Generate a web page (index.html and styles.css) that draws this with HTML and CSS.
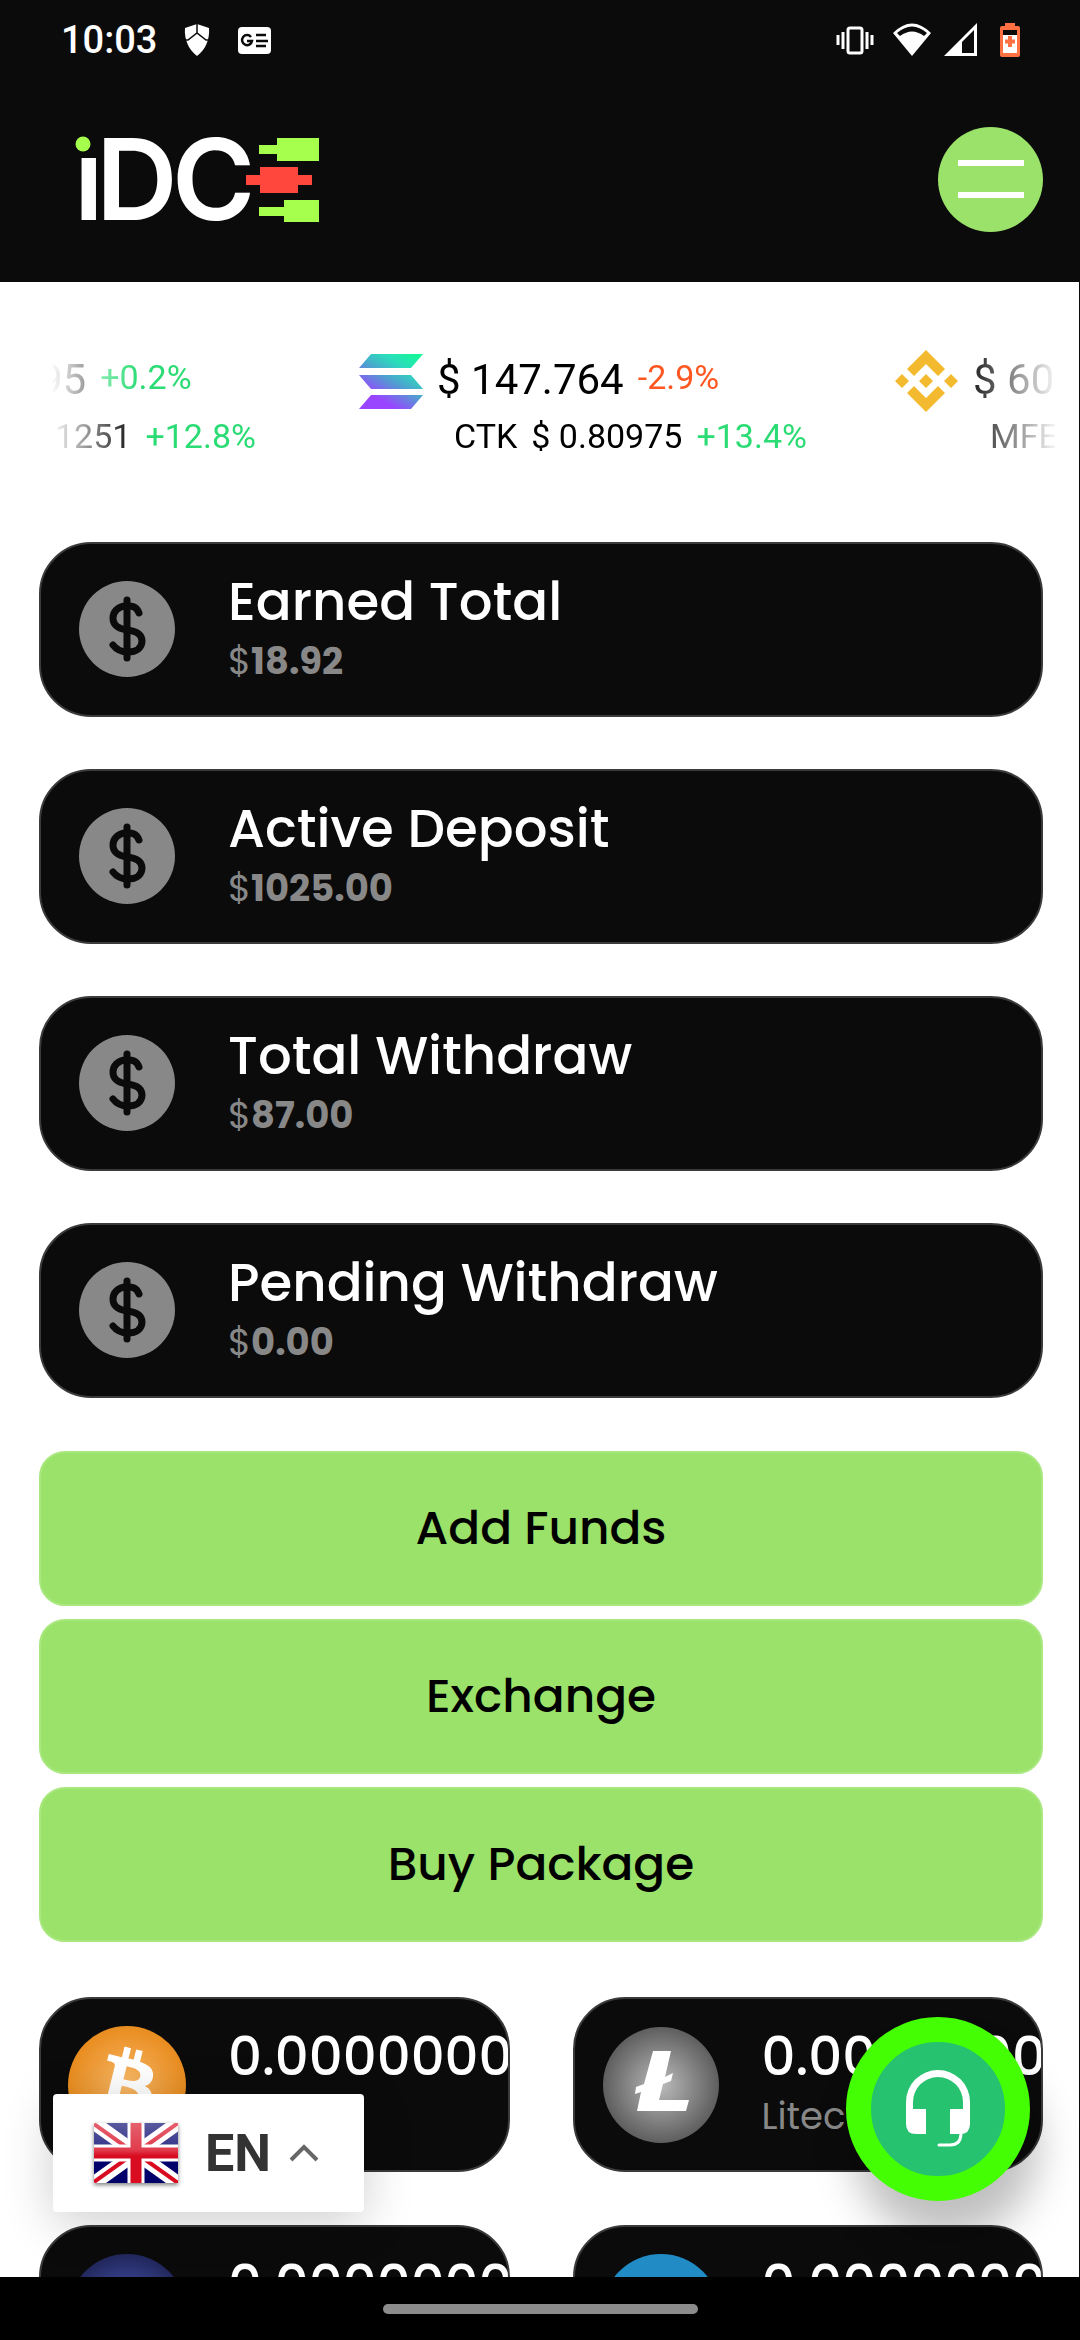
FILE: index.html
```html
<!DOCTYPE html>
<html lang="en">
<head>
<meta charset="utf-8">
<meta name="viewport" content="width=device-width, initial-scale=1">
<title>iDCE Dashboard</title>
<link rel="stylesheet" href="styles.css">
</head>
<body>
<svg class="defs" aria-hidden="true">
  <defs>
    <symbol id="coin" viewBox="0 0 96 96">
      <circle cx="48" cy="48" r="48" fill="#888"/>
      <g fill="none" stroke="#0b0b0b" stroke-width="7" stroke-linecap="round">
        <path d="M48 19V77"/>
        <path d="M60 32C57 24 51 25 47 25C39 25 34 31 34 37C34 46 42 48 48 49C56 50 63 52 63 60C63 67 57 71 49 71C41 71 37 68 34 64"/>
      </g>
    </symbol>
  </defs>
</svg>
<div class="screen">
  <div class="status">
    <span class="time">10:03</span>
    <svg class="shield" width="26" height="32" viewBox="0 0 26 32"><path d="M13 0L25 4C26 16 21 26 13 32C5 26 0 16 1 4Z" fill="#fff"/><path d="M13 0V9M0 16H4L13 9L22 16H26" fill="none" stroke="#0b0b0b" stroke-width="1.500"/></svg>
    <svg class="news" width="34" height="27" viewBox="0 0 34 27"><rect width="33" height="27" rx="4" fill="#fff"/><path d="M13 10A5 5 0 1 0 14 14H9" fill="none" stroke="#0b0b0b" stroke-width="2.500"/><path d="M18 8H28M18 14H30M18 19H28" stroke="#0b0b0b" stroke-width="2.500"/></svg>
    <div class="system">
      <svg width="38" height="34" viewBox="0 0 38 34"><rect x="12" y="5" width="14" height="25" rx="2" fill="none" stroke="#fff" stroke-width="3"/><path d="M7 9V26M31 9V26M2 12V22M36 12V22" stroke="#fff" stroke-width="3"/></svg>
      <svg width="40" height="34" viewBox="0 0 40 34"><path d="M20 33L1 10Q20-9 39 10Z" fill="#fff"/><path d="M5 10Q20-3 35 10L32 13Q20 4 8 13Z" fill="#0b0b0b"/></svg>
      <svg width="34" height="34" viewBox="0 0 34 34"><path d="M0 33L33 0V33Z" fill="#fff"/><path d="M18 19L30 7V30H18Z" fill="#0b0b0b"/></svg>
      <svg class="battery" width="20" height="34" viewBox="0 0 20 34"><path d="M5 0H15V3H18Q20 3 20 5V32Q20 34 18 34H2Q0 34 0 32V5Q0 3 2 3H5Z" fill="#ff7043"/><path d="M3 7H17V12H3Z" fill="#0b0b0b"/><path d="M3 12H17V30H3Z" fill="#fff"/><path d="M10 13V24M5 18.500H15" stroke="#ff7043" stroke-width="4"/></svg>
    </div>
  </div>
  <header class="header">
    <a class="logo" href="#" aria-label="iDCE home">
      <svg width="246" height="90" viewBox="0 0 246 90">
        <g class="logo-text"><text x="-1" y="86">ı</text><text x="21" y="86">D</text><text x="97" y="86">C</text></g>
        <circle cx="8" cy="10" r="7.500" fill="#a6ff4d"/>
        <path d="M184 11H202V4H244V27H202V20H184ZM184 73H209V66H244V88H209V82H184Z" fill="#a6ff4d"/>
        <path d="M171 41H185V33H223V41H237V51H223V59H185V51H171Z" fill="#ff473d"/>
      </svg>
    </a>
    <button class="menu" aria-label="Menu"><span></span><span></span></button>
  </header>
  <main class="main">
    <section class="ticker" aria-label="Prices">
      <div class="quote quote-first">
        <div class="major"><span class="price">95</span><span class="pct up">+0.2%</span></div>
        <div class="minor"><span>1251</span><span class="up">+12.8%</span></div>
      </div>
      <div class="quote">
        <div class="major">
          <svg class="coin-mark" width="64" height="62" viewBox="0 0 64 62"><defs><linearGradient id="sol" gradientUnits="userSpaceOnUse" x1="52" y1="0" x2="14" y2="62"><stop offset="0" stop-color="#14f995"/><stop offset=".25" stop-color="#2bdcbc"/><stop offset=".5" stop-color="#4f9fd0"/><stop offset=".8" stop-color="#9945ff"/></linearGradient></defs><path d="M12 4H64L52 18H0ZM0 25H52L64 39H12ZM12 45H64L52 59H0Z" fill="url(#sol)"/></svg>
          <span class="price">$ 147.764</span><span class="pct down">-2.9%</span></div>
        <div class="minor indent"><span>CTK</span><span class="value">$ 0.80975</span><span class="up">+13.4%</span></div>
      </div>
      <div class="quote">
        <div class="major">
          <svg class="coin-mark" width="64" height="62" viewBox="0 0 64 62"><path d="M31 0L50 19L43 26L31 14L19 26L12 19ZM31 62L50 43L43 36L31 48L19 36L12 43ZM31 24L38 31L31 38L24 31ZM7 24L14 31L7 38L0 31ZM56 24L63 31L56 38L49 31Z" fill="#f3ba2f"/></svg>
          <span class="price">$ 60</span></div>
        <div class="minor indent"><span>MFE</span></div>
      </div>
    </section>
    <section class="stats">
      <article class="card"><svg class="coin"><use href="#coin"/></svg><div class="text"><h2>Earned Total</h2><p>$<b>18.92</b></p></div></article>
      <article class="card"><svg class="coin"><use href="#coin"/></svg><div class="text"><h2>Active Deposit</h2><p>$<b>1025.00</b></p></div></article>
      <article class="card"><svg class="coin"><use href="#coin"/></svg><div class="text"><h2>Total Withdraw</h2><p>$<b>87.00</b></p></div></article>
      <article class="card"><svg class="coin"><use href="#coin"/></svg><div class="text"><h2>Pending Withdraw</h2><p>$<b>0.00</b></p></div></article>
    </section>
    <section class="actions">
      <button>Add Funds</button>
      <button>Exchange</button>
      <button>Buy Package</button>
    </section>
    <section class="wallets">
      <article class="card wallet">
        <svg class="crypto" viewBox="0 0 118 118"><defs><radialGradient id="btc"><stop offset="0" stop-color="#f9b968"/><stop offset="1" stop-color="#e88c1f"/></radialGradient></defs><circle cx="59" cy="59" r="59" fill="url(#btc)"/><path transform="scale(.02884)" fill="#fff" d="m2947.770 1754.380c40.720-272.260-166.560-418.610-450-516.240l91.950-368.800-224.500-55.940-89.510 359.090c-59.020-14.720-119.630-28.590-179.870-42.340l90.160-361.460-224.360-55.940-92 368.680c-48.840-11.120-96.810-22.110-143.350-33.690l.26-1.160-309.590-77.310-59.720 239.780s166.560 38.180 163.050 40.530c90.910 22.690 107.350 82.870 104.620 130.570l-104.740 420.150-146.810 588.570c-11.110 27.620-39.310 69.070-102.870 53.330 2.250 3.260-163.170-40.720-163.170-40.720l-111.460 256.980 292.150 72.830c54.350 13.630 107.610 27.890 160.060 41.300l-92.900 373.030 224.240 55.940 92-369.070c61.260 16.630 120.710 31.970 178.910 46.430l-91.690 367.330 224.510 55.940 92.890-372.330c382.820 72.450 670.670 43.240 791.830-303.020 97.630-278.780-4.860-439.580-206.260-544.440 146.690-33.830 257.180-130.310 286.640-329.610zm-512.930 719.260c-69.380 278.780-538.760 128.080-690.940 90.290l123.280-494.200c152.170 37.990 640.170 113.170 567.670 403.910zm69.430-723.300c-63.290 253.580-453.960 124.750-580.690 93.160l111.770-448.210c126.730 31.590 534.850 90.550 468.940 355.050z"/></svg>
        <div class="text"><h2>0.0000000</h2><p>Bitcoin</p></div>
      </article>
      <article class="card wallet">
        <svg class="crypto" viewBox="-1 -1 118 118"><defs><radialGradient id="ltc"><stop offset="0" stop-color="#bbb"/><stop offset="1" stop-color="#5e5e5e"/></radialGradient></defs><circle cx="58" cy="58" r="58" fill="url(#ltc)"/><path d="M50 24H68L62 50L70 46L68 54L60 57L56 73H86L83 84H34L38 65L32 67L33 60L41 57Z" fill="#fff"/></svg>
        <div class="text"><h2>0.0000000</h2><p>Litecoin</p></div>
      </article>
      <article class="card wallet">
        <svg class="crypto" viewBox="0 0 118 118"><defs><radialGradient id="navy"><stop offset="0" stop-color="#4d5bc0"/><stop offset="1" stop-color="#22285c"/></radialGradient></defs><circle cx="59" cy="59" r="59" fill="url(#navy)"/></svg>
        <div class="text"><h2>0.0000000</h2></div>
      </article>
      <article class="card wallet">
        <svg class="crypto" viewBox="0 0 118 118"><circle cx="59" cy="59" r="59" fill="#208bc4"/></svg>
        <div class="text"><h2>0.0000000</h2></div>
      </article>
    </section>
    <button class="language" aria-label="Language: EN">
      <svg class="flag" width="84" height="60" viewBox="0 0 84 60"><defs><linearGradient id="shine" x2="0" y2="1"><stop offset="0" stop-color="#fff" stop-opacity=".35"/><stop offset=".45" stop-color="#fff" stop-opacity=".2"/><stop offset=".55" stop-color="#fff" stop-opacity="0"/></linearGradient><clipPath id="flag-clip"><rect width="84" height="60"/></clipPath></defs><g clip-path="url(#flag-clip)"><rect width="84" height="60" fill="#00006b"/><path d="M0 0L84 60M84 0L0 60" stroke="#fff" stroke-width="14"/><path d="M0 1L42 31M84 0L42 30M42 30L84 60M42 29L0 59" stroke="#d80b20" stroke-width="4"/><path d="M42 0V60M0 30H84" stroke="#fff" stroke-width="17"/><path d="M42 0V60M0 30H84" stroke="#d80b20" stroke-width="11"/><rect width="84" height="60" fill="url(#shine)"/></g></svg>
      <span>EN</span>
      <svg width="30" height="20" viewBox="0 0 30 20"><path d="M2 17L15 4L28 17" fill="none" stroke="#666" stroke-width="4"/></svg>
    </button>
    <button class="support" aria-label="Support">
      <svg width="64" height="78" viewBox="0 0 64 78"><path d="M0 32A32 32 0 0 1 64 32V54Q64 64 54 64H44V39H57V32A25 25 0 0 0 7 32V39H20V64H10Q0 64 0 54Z" fill="#fff"/><path d="M55 63Q55 75 44 75H33" fill="none" stroke="#fff" stroke-width="3" stroke-linecap="round"/></svg>
    </button>
  </main>
  <footer class="navbar"><span></span></footer>
</div>
</body>
</html>
```
FILE: styles.css
```css
* { box-sizing: border-box; }
body { margin: 0; background: #0b0b0b; font-family: Poppins, Inter, sans-serif; }
h2, p { margin: 0; }
button { border: 0; padding: 0; font: inherit; cursor: pointer; }
svg { display: block; flex: none; }
.defs { position: absolute; width: 0; height: 0; }
.screen { display: flex; flex-direction: column; height: 100vh; overflow: hidden; }

.status { display: flex; align-items: center; height: 80px; padding: 0 60px 0 61px; color: #fff; }
.time { font: 500 38px/44px Roboto, sans-serif; }
.shield { margin-left: 27px; }
.news { margin-left: 28px; }
.system { display: flex; align-items: center; margin-left: auto; }
.system svg { margin-left: 12px; }
.system svg:nth-child(2) { margin-left: 18px; }
.system .battery { margin-left: 22px; }

.header { display: flex; justify-content: space-between; align-items: center; height: 202px; padding: 0 37px 4px 75px; }
.logo svg { overflow: visible; }
.logo-text { font: 600 113px Inter, sans-serif; fill: #fff; }
.menu { display: flex; flex-direction: column; align-items: center; justify-content: center; gap: 26px; width: 105px; height: 105px; border-radius: 50%; background: #9ae269; }
.menu span { width: 66px; height: 6px; background: #fff; }

.main { position: relative; flex: 1; min-height: 0; margin-right: 1px; padding: 0 36px 0 39px; overflow: hidden; background: #fff; }
.ticker { display: flex; height: 260px; margin-right: -12px; padding-top: 64px; overflow: hidden; font-family: Roboto, sans-serif; color: #000; mask-image: linear-gradient(to right, transparent 12px, #000 100px, #000 920px, transparent 1020px); }
.quote { flex: none; width: 536px; white-space: nowrap; }
.quote-first { width: 320px; }
.major { display: flex; align-items: center; height: 66px; gap: 14px; font-size: 42px; }
.coin-mark { margin-top: 4px; }
.major .pct { font-size: 34px; line-height: 40px; margin-bottom: 4px; }
.minor { display: flex; gap: 14px; font-size: 34px; line-height: 44px; margin-top: 2px; }
.quote-first .minor { padding-left: 16px; }
.indent { padding-left: 95px; }
.up { color: #2bdc74; }
.down { color: #ff5722; }

.stats { display: grid; gap: 52px; }
.card { display: flex; height: 175px; padding-left: 38px; overflow: hidden; border: 2px solid #3b3b3b; border-radius: 52px; background: #0b0b0b; }
.coin { width: 96px; height: 96px; margin-top: 37px; }
.text { margin: 24px 0 0 53px; white-space: nowrap; }
.text h2 { font-size: 53px; line-height: 68px; font-weight: 500; color: #fff; }
.text p { font-size: 37px; line-height: 50px; color: #888; }

.actions { display: grid; gap: 13px; margin-top: 53px; }
.actions button { height: 155px; padding-bottom: 2px; border: 2px solid #a9e77f; border-radius: 26px; background: #9ae269; color: #000; font-size: 47px; font-weight: 500; }

.wallets { display: grid; grid-template-columns: 1fr 1fr; gap: 53px 63px; margin-top: 55px; }
.wallet { min-width: 0; padding-left: 27px; }
.crypto { width: 118px; height: 118px; margin-top: 27px; }
.wallet .text { margin-left: 42px; }

.language { position: absolute; left: 53px; bottom: 65px; display: flex; align-items: center; height: 118px; padding: 0 45px 0 41px; border-radius: 4px; background: #fff; color: #333; font: 700 52px Roboto, sans-serif; box-shadow: 0 10px 50px rgba(0, 0, 0, .2); }
.language span { margin: 0 18px 0 27px; }
.flag { filter: drop-shadow(0 2px 2px rgba(0, 0, 0, .5)); }
.support { position: absolute; right: 49px; bottom: 76px; display: grid; place-items: center; width: 184px; height: 184px; border: 25px solid #44ff03; border-radius: 50%; background: #27c26f; box-shadow: 8px 38px 40px rgba(0, 0, 0, .25); }

.navbar { display: flex; justify-content: center; align-items: center; height: 63px; padding-top: 1px; background: #000; }
.navbar span { width: 315px; height: 10px; border-radius: 5px; background: #8c8c8c; }
```
